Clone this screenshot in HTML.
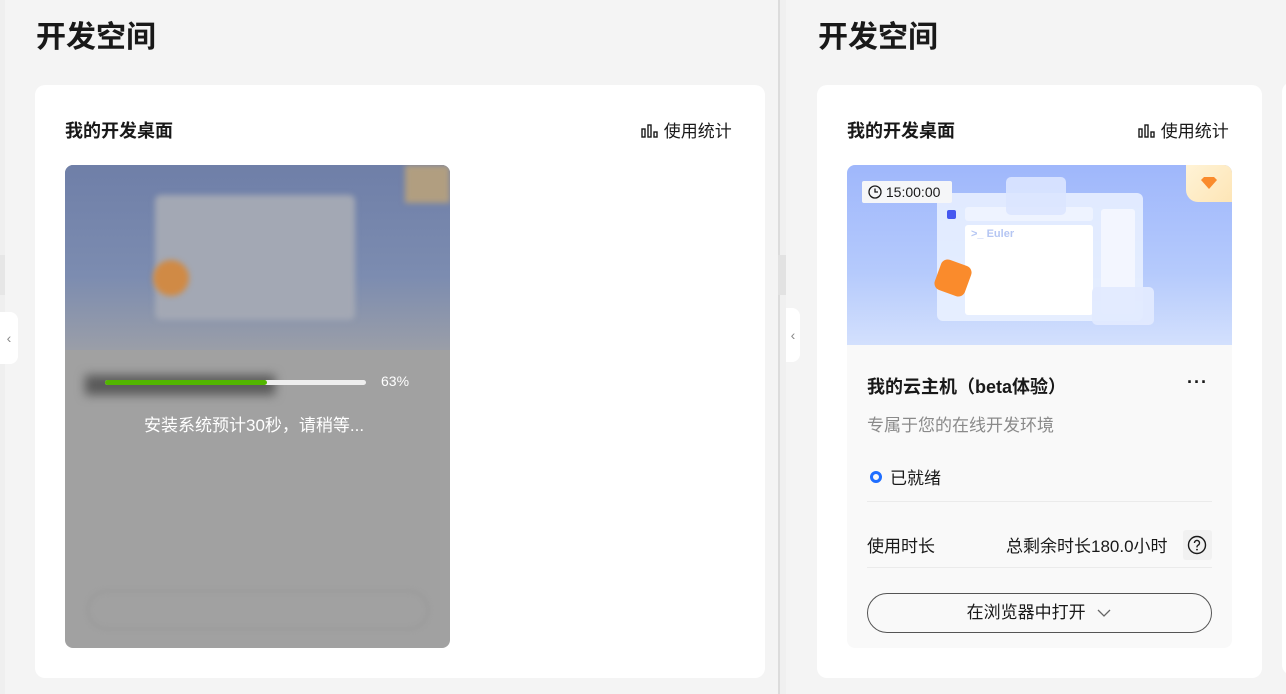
<!DOCTYPE html>
<html><head><meta charset="utf-8"><style>
*{box-sizing:border-box;margin:0;padding:0}
body{width:1286px;height:694px;overflow:hidden;background:#f4f4f4;font-family:"Liberation Sans","Noto Sans CJK SC",sans-serif;color:#191919;position:relative}
.abs{position:absolute}
.h1{font-size:30px;font-weight:bold;top:12px}
.card{background:#fff;border-radius:10px;top:85px;height:593px}
.t2{font-size:18px;font-weight:bold;top:117px}
.stat{font-size:17px;top:117px}
.inner{border-radius:8px;overflow:hidden}
</style></head><body>
<div class="abs" style="left:0;top:0;width:5px;height:694px;background:#efefef"></div>
<div class="abs" style="left:0;top:255px;width:5px;height:40px;background:#e6e6e6"></div>
<div class="abs" style="left:0;top:312px;width:18px;height:52px;background:#fff;border-radius:0 8px 8px 0;color:#888;font-size:14px;line-height:52px;text-align:center">‹</div>
<div class="abs h1" style="left:36px">开发空间</div>
<div class="abs card" style="left:35px;width:730px"></div>
<div class="abs t2" style="left:65px">我的开发桌面</div>
<div class="abs stat" style="left:641px"><svg width="18" height="14" viewBox="0 0 18 14" style="vertical-align:-1px"><g fill="none" stroke="#191919" stroke-width="1.4"><rect x="1" y="5" width="3" height="8"/><rect x="7" y="1" width="3" height="12"/><rect x="13" y="8" width="3" height="5"/></g></svg> 使用统计</div>
<div class="abs inner" style="left:65px;top:165px;width:385px;height:483px;background:#a1a1a1">
 <div class="abs" style="left:0;top:0;width:385px;height:185px;background:linear-gradient(180deg,#6f7fa8,#7c8cb0 60%,#9a9ea8)"></div>
 <div class="abs" style="left:90px;top:30px;width:200px;height:125px;background:#a3a8b4;border-radius:6px;filter:blur(3px)"></div>
 <div class="abs" style="left:88px;top:95px;width:36px;height:36px;background:#d08a45;border-radius:50%;filter:blur(3px)"></div>
 <div class="abs" style="left:340px;top:0;width:45px;height:38px;background:#b19e80;filter:blur(3px)"></div>
 <div class="abs" style="left:20px;top:210px;width:190px;height:20px;background:#5a5a5a;filter:blur(5px)"></div>
 <div class="abs" style="left:22px;top:425px;width:342px;height:40px;border:2px solid #999;border-radius:20px;filter:blur(2px)"></div>
 <div class="abs" style="left:40px;top:215px;width:261px;height:5px;background:#eee;border-radius:3px"></div>
 <div class="abs" style="left:40px;top:215px;width:162px;height:5px;background:#52b500;border-radius:3px"></div>
 <div class="abs" style="left:316px;top:208px;color:#fff;font-size:14px">63%</div>
 <div class="abs" style="left:79px;top:246px;color:#fff;font-size:17px">安装系统预计30秒，请稍等...</div>
</div>

<div class="abs" style="left:778px;top:0;width:8px;height:694px;background:#f0f0f0;border-left:2px solid #dcdcdc"></div>
<div class="abs" style="left:778px;top:255px;width:8px;height:40px;background:#e2e2e2"></div>
<div class="abs" style="left:786px;top:308px;width:14px;height:54px;background:#fff;border-radius:0 8px 8px 0;color:#888;font-size:14px;line-height:54px;text-align:center">‹</div>

<div class="abs h1" style="left:818px">开发空间</div>
<div class="abs card" style="left:817px;width:445px"></div>
<div class="abs card" style="left:1282px;width:20px;top:82px"></div>
<div class="abs t2" style="left:847px">我的开发桌面</div>
<div class="abs stat" style="left:1138px"><svg width="18" height="14" viewBox="0 0 18 14" style="vertical-align:-1px"><g fill="none" stroke="#191919" stroke-width="1.4"><rect x="1" y="5" width="3" height="8"/><rect x="7" y="1" width="3" height="12"/><rect x="13" y="8" width="3" height="5"/></g></svg> 使用统计</div>
<div class="abs inner" style="left:847px;top:165px;width:385px;height:483px;background:#f9f9f9">
 <div class="abs" style="left:0;top:0;width:385px;height:180px;background:linear-gradient(180deg,#9fb7fb,#b5cafc 60%,#d3e0fd)"></div>
 <div class="abs" style="left:90px;top:28px;width:206px;height:128px;background:rgba(235,242,255,.85);border-radius:6px"></div>
 <div class="abs" style="left:118px;top:60px;width:128px;height:90px;background:#fff;border-radius:3px"></div>
 <div class="abs" style="left:124px;top:63px;font-size:11px;font-weight:bold;color:#b5c6f3">&gt;_ Euler</div>
 <div class="abs" style="left:118px;top:42px;width:128px;height:14px;background:#eef3ff;border-radius:3px"></div>
 <div class="abs" style="left:254px;top:44px;width:34px;height:105px;background:#f3f6ff;border-radius:3px"></div>
 <div class="abs" style="left:100px;top:45px;width:9px;height:9px;background:#4558f0;border-radius:2px"></div>
 <div class="abs" style="left:159px;top:12px;width:60px;height:38px;background:rgba(220,230,255,.9);border-radius:5px"></div>
 <div class="abs" style="left:245px;top:122px;width:62px;height:38px;background:rgba(225,234,255,.95);border-radius:5px"></div>
 <div class="abs" style="left:90px;top:97px;width:32px;height:32px;background:#fa8b2c;border-radius:7px;transform:rotate(20deg)"></div>
 <div class="abs" style="left:15px;top:16px;width:90px;height:22px;background:#f5f6f8;border-radius:2px;font-size:14px;line-height:22px;padding-left:6px"><svg width="14" height="14" viewBox="0 0 14 14" style="vertical-align:-2px"><circle cx="7" cy="7" r="6" fill="none" stroke="#191919" stroke-width="1.3"/><path d="M7 3.5V7h3" fill="none" stroke="#191919" stroke-width="1.3"/></svg> 15:00:00</div>
 <div class="abs" style="left:339px;top:0;width:46px;height:37px;background:linear-gradient(135deg,#fff3d6,#fde5b6);border-radius:0 0 0 12px"></div>
 <svg class="abs" style="left:353px;top:11px" width="18" height="14" viewBox="0 0 18 14"><path d="M1 4L4 1h10l3 3-8 9z" fill="#fa8b2c"/></svg>
 <div class="abs" style="left:20px;top:208px;font-size:18px;font-weight:bold">我的云主机（beta体验）</div>
 <div class="abs" style="left:340px;top:207px;font-size:18px;font-weight:bold;letter-spacing:1px">···</div>
 <div class="abs" style="left:20px;top:246px;font-size:17px;color:#8a8a8a">专属于您的在线开发环境</div>
 <div class="abs" style="left:23px;top:306px;width:12px;height:12px;border:3px solid #1f6eff;border-radius:50%"></div>
 <div class="abs" style="left:43px;top:299px;font-size:17px">已就绪</div>
 <div class="abs" style="left:20px;top:336px;width:345px;height:1px;background:#ebebeb"></div>
 <div class="abs" style="left:20px;top:367px;font-size:17px">使用时长</div>
 <div class="abs" style="left:159px;top:367px;font-size:17px">总剩余时长180.0小时</div>
 <div class="abs" style="left:336px;top:365px;width:29px;height:30px;background:#f1f1f1;border-radius:3px"></div>
 <svg class="abs" style="left:340px;top:370px" width="20" height="20" viewBox="0 0 20 20"><circle cx="10" cy="10" r="8.5" fill="none" stroke="#191919" stroke-width="1.4"/><path d="M7.5 8a2.5 2.5 0 1 1 3.5 2.2c-.7.4-1 .8-1 1.6v.6" fill="none" stroke="#191919" stroke-width="1.4"/><circle cx="10" cy="14.6" r=".9" fill="#191919"/></svg>
 <div class="abs" style="left:20px;top:402px;width:345px;height:1px;background:#ebebeb"></div>
 <div class="abs" style="left:20px;top:428px;width:345px;height:40px;border:1px solid #555;border-radius:20px;text-align:center;font-size:17px;line-height:38px">在浏览器中打开 <svg width="16" height="10" viewBox="0 0 16 10" style="margin-left:6px"><path d="M2 2l6 6 6-6" fill="none" stroke="#666" stroke-width="1.3"/></svg></div>
</div>
</body></html>
